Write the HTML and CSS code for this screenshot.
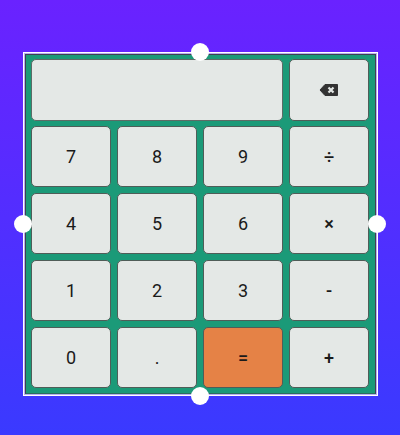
FILE: index.html
```html
<!DOCTYPE html>
<html lang="en">
<head>
    <meta charset="UTF-8">
    <meta name="viewport" content="width=device-width, initial-scale=1.0">
    <title>Calculator</title>
    <link rel="stylesheet" href="styles.css">
</head>
<body>
    <div class="frame">
        <span class="handle handle-top"></span>
        <span class="handle handle-left"></span>
        <span class="handle handle-right"></span>
        <span class="handle handle-bottom"></span>
        <div class="calculator">
            <div class="display"></div>
            <button class="key" aria-label="Backspace">
                <svg class="backspace" width="20" height="14" viewBox="0 0 20 14">
                    <path d="M6 1.5H18.5V12.5H6L1 7Z" fill="#333" stroke="#333" stroke-linejoin="round"/>
                    <path d="M9.5 4.5L14.5 9.5M14.5 4.5L9.5 9.5" stroke="#e4e8e6" stroke-width="2.2"/>
                </svg>
            </button>
            <button class="key">7</button>
            <button class="key">8</button>
            <button class="key">9</button>
            <button class="key key-op">÷</button>
            <button class="key">4</button>
            <button class="key">5</button>
            <button class="key">6</button>
            <button class="key key-op">×</button>
            <button class="key">1</button>
            <button class="key">2</button>
            <button class="key">3</button>
            <button class="key key-op">-</button>
            <button class="key">0</button>
            <button class="key">.</button>
            <button class="key key-op key-equals">=</button>
            <button class="key key-op">+</button>
        </div>
    </div>
</body>
</html>
```

FILE: styles.css
```css
html, body {
    height: 100%;
}
body {
    margin: 0;
    background: linear-gradient(to bottom, #6a22ff, #3a3aff);
    font-family: Roboto, sans-serif;
    overflow: hidden;
}
.frame {
    position: relative;
    box-sizing: border-box;
    width: 354.5px;
    height: 344px;
    margin-left: 23px;
    top: 52px;
    border: 1px solid #fff;
    padding: 1px;
    background-color: #b7b0ec;
}
.calculator {
    box-sizing: border-box;
    height: 100%;
    display: grid;
    grid-template-columns: repeat(4, 80.3px);
    grid-auto-rows: 61.4px;
    gap: 5.5px 5.7px;
    padding: 4.2px 5px 5px;
    background-color: #1b9a78;
    border: 1px solid #3f3f55;
    border-bottom-color: #2c6f60;
}
.display {
    grid-column: span 3;
    background-color: #e4e8e6;
    border: 1px solid #5d6b66;
    border-radius: 5px;
}
.key {
    display: flex;
    justify-content: center;
    align-items: center;
    padding: 0;
    background-color: #e4e8e6;
    border: 1px solid #4f5d58;
    border-radius: 5px;
    color: #1a1a1a;
    font-family: Roboto, sans-serif;
    font-size: 18px;
}
.key-op {
    font-weight: 500;
}
.key-equals {
    background-color: #e58246;
}
.handle {
    position: absolute;
    width: 18px;
    height: 18px;
    border-radius: 50%;
    background-color: #fff;
    z-index: 1;
}
.handle-top {
    top: -10px;
    left: calc(50% - 9.25px);
}
.handle-bottom {
    bottom: -10px;
    left: calc(50% - 9.25px);
}
.handle-left {
    left: -10px;
    top: calc(50% - 9px);
}
.handle-right {
    right: -9.5px;
    top: calc(50% - 9px);
}
```
